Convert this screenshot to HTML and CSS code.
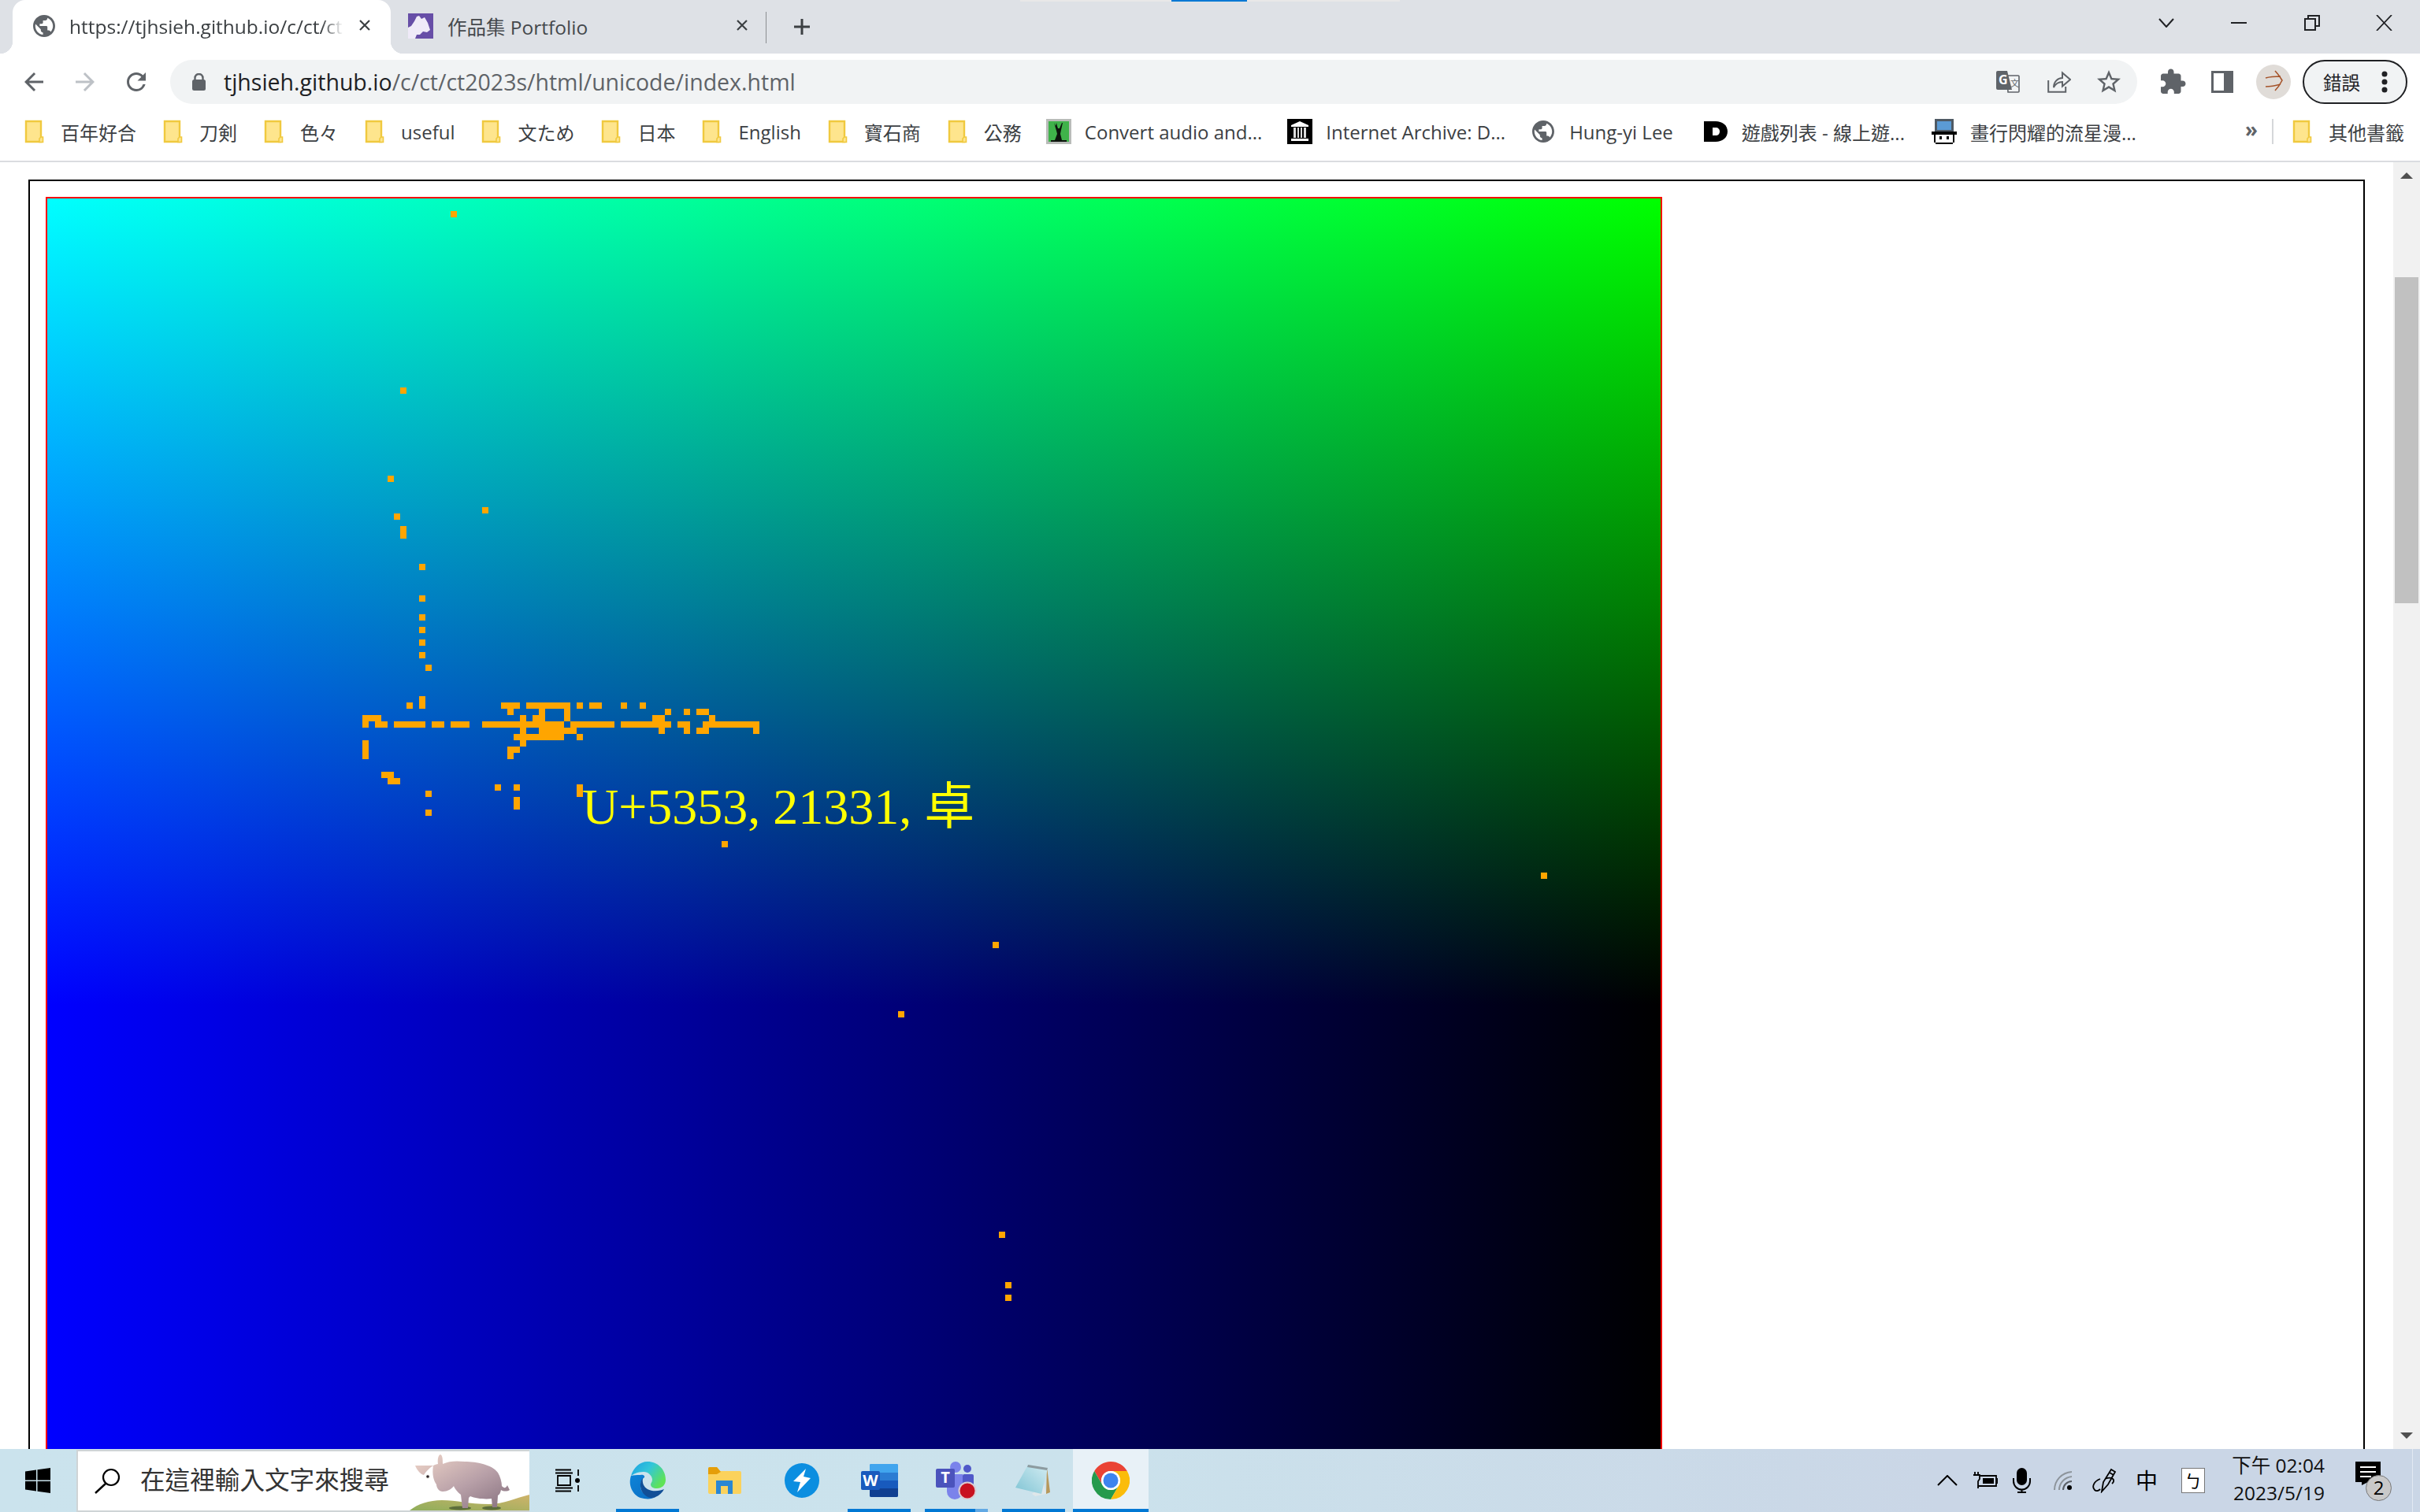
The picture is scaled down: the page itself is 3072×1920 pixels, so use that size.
FILE: index.html
```html
<!DOCTYPE html>
<html lang="zh-Hant">
<head>
<meta charset="utf-8">
<title>Unicode</title>
<link rel="stylesheet" href="styles.css">
</head>
<body>
<svg class="defs" width="0" height="0" aria-hidden="true">
  <symbol id="folder" viewBox="0 0 32 32">
    <path d="M5 3h19v26H5z" fill="#fee58d" stroke="#f0c93f" stroke-width="2.4"/>
    <path d="M24 23h2.500v6.500H22V25z" fill="#fee58d" stroke="#f0c93f" stroke-width="1.600"/>
  </symbol>
  <symbol id="globe" viewBox="2 2 20 20">
    <path d="M12 2C6.480 2 2 6.480 2 12s4.480 10 10 10 10-4.480 10-10S17.520 2 12 2zm-1 17.930c-3.950-.49-7-3.850-7-7.930 0-.62.08-1.210.21-1.790L9 15v1c0 1.100.9 2 2 2v1.930zm6.900-2.540c-.26-.81-1-1.390-1.900-1.390h-1v-3c0-.55-.45-1-1-1H8v-2h2c.55 0 1-.45 1-1V7h2c1.100 0 2-.9 2-2v-.41c2.930 1.190 5 4.060 5 7.410 0 2.080-.8 3.970-2.100 5.390z" fill="#5f6368"/>
  </symbol>
</svg>

<div class="screen-strip"><span class="screen-strip-mark"></span></div>

<header class="tabstrip">
  <div class="tab tab-active">
    <svg class="tab-icon" width="28" height="28"><use href="#globe"/></svg>
    <span class="tab-title tab-title-fade">https://tjhsieh.github.io/c/ct/ct</span>
    <svg class="tab-close" width="16" height="16" viewBox="0 0 16 16"><path d="M2 2l12 12M14 2L2 14" stroke="#3c4043" stroke-width="2.2"/></svg>
  </div>
  <div class="tab tab-idle">
    <svg class="tab-icon-p" width="32" height="32" viewBox="0 0 32 32">
      <rect width="32" height="32" fill="#674ea7"/>
      <path d="M14 3l3 4 4-2 4 7 3 9-4 3-5-1-4 4-4 0-2 5H0V18l4-2 4-6 3-6z" fill="#efeaf8"/>
    </svg>
    <span class="tab-title tab-title-idle">作品集 Portfolio</span>
    <svg class="tab-close tab-close-idle" width="16" height="16" viewBox="0 0 16 16"><path d="M2 2l12 12M14 2L2 14" stroke="#3c4043" stroke-width="2.2"/></svg>
  </div>
  <svg class="new-tab" width="24" height="24" viewBox="0 0 24 24"><path d="M12 2v20M2 12h20" stroke="#3c4043" stroke-width="3"/></svg>
  <div class="win-controls">
    <svg width="20" height="12" viewBox="0 0 20 12"><path d="M1 1l9 10 9-10" fill="none" stroke="#202124" stroke-width="2"/></svg>
    <svg class="win-min" width="20" height="2"><rect width="20" height="2" fill="#202124"/></svg>
    <svg class="win-max" width="20" height="20" viewBox="0 0 20 20"><path d="M1 5h13v14H1zM5 5V1h14v13h-5" fill="none" stroke="#202124" stroke-width="2"/></svg>
    <svg class="win-close" width="21" height="20" viewBox="0 0 21 20"><path d="M1 0l19 20M20 0L1 20" stroke="#202124" stroke-width="1.8"/></svg>
  </div>
</header>

<nav class="toolbar">
  <svg class="nav-btn" width="36" height="36" viewBox="0 0 24 24"><path d="M20 11H7.830l5.590-5.590L12 4l-8 8 8 8 1.410-1.410L7.830 13H20v-2z" fill="#5f6368"/></svg>
  <svg class="nav-btn" width="36" height="36" viewBox="0 0 24 24"><path d="M4 11h12.170l-5.590-5.590L12 4l8 8-8 8-1.410-1.410L16.170 13H4v-2z" fill="#bdc1c6"/></svg>
  <svg class="nav-btn" width="36" height="36" viewBox="0 0 24 24"><path d="M17.650 6.350A7.958 7.958 0 0 0 12 4c-4.420 0-7.990 3.580-7.990 8s3.570 8 7.990 8c3.730 0 6.840-2.550 7.730-6h-2.080A5.990 5.990 0 0 1 12 18c-3.310 0-6-2.690-6-6s2.690-6 6-6c1.660 0 3.140.69 4.220 1.780L13 11h7V4l-2.350 2.350z" fill="#5f6368"/></svg>
  <div class="omnibox">
    <svg class="lock" width="17" height="22" viewBox="0 0 17 22"><path d="M3.500 9V6a5 5 0 0 1 10 0v3" fill="none" stroke="#5f6368" stroke-width="2.4"/><rect y="8" width="17" height="14" rx="2.500" fill="#5f6368"/></svg>
    <span class="url"><span class="url-host">tjhsieh.github.io</span>/c/ct/ct2023s/html/unicode/index.html</span>
    <svg class="omni-translate" width="30" height="28" viewBox="0 0 30 28">
      <path d="M14 6h14a1 1 0 0 1 1 1v19a1 1 0 0 1-1 1H15z" fill="#f1f3f4" stroke="#5f6368" stroke-width="1.600"/>
      <path d="M2 0h12l6 24H2a2 2 0 0 1-2-2V2a2 2 0 0 1 2-2z" fill="#5f6368"/>
      <text x="3" y="17" class="tr-g">G</text><text x="18" y="20" class="tr-w">文</text>
    </svg>
    <svg class="omni-share" width="30" height="28" viewBox="0 0 30 28"><path d="M1.200 12v14.800h22V20" fill="none" stroke="#5f6368" stroke-width="2"/><path d="M8 21c0-7 5-12 11-12V2.500L29 11l-10 8.500V14c-5 0-9 3-11 7z" fill="none" stroke="#5f6368" stroke-width="2"/></svg>
    <svg class="omni-star" width="36" height="36" viewBox="0 0 24 24"><path d="M22 9.240l-7.190-.62L12 2 9.190 8.630 2 9.240l5.460 4.730L5.820 21 12 17.270 18.180 21l-1.630-7.030L22 9.240zM12 15.400l-3.760 2.270 1-4.280-3.320-2.880 4.380-.38L12 6.100l1.710 4.040 4.380.38-3.320 2.880 1 4.280L12 15.400z" fill="#5f6368"/></svg>
  </div>
  <svg class="tool-puzzle" width="36" height="36" viewBox="0 0 24 24"><path d="M20.500 11H19V7c0-1.100-.9-2-2-2h-4V3.500C13 2.120 11.880 1 10.500 1S8 2.120 8 3.500V5H4c-1.100 0-1.990.9-1.990 2v3.800H3.500c1.490 0 2.700 1.210 2.700 2.700s-1.210 2.700-2.700 2.700H2V20c0 1.100.9 2 2 2h3.800v-1.500c0-1.490 1.210-2.700 2.700-2.700 1.490 0 2.700 1.210 2.700 2.700V22H17c1.100 0 2-.9 2-2v-4h1.500c1.380 0 2.500-1.120 2.500-2.500S21.880 11 20.500 11z" fill="#5f6368"/></svg>
  <svg class="tool-panel" width="28" height="28" viewBox="0 0 28 28"><rect width="28" height="28" fill="#5f6368"/><rect x="3" y="3" width="13" height="22" fill="#fff"/></svg>
  <svg class="tool-avatar" width="44" height="44" viewBox="0 0 44 44"><circle cx="22" cy="22" r="22" fill="#e0dcd8"/><path d="M12 17c7-2 13-2 19-2M12 28c6 0 12-1 19-3M24 8c4 4 7 9 9 12-2 4-5 9-9 13" fill="none" stroke="#a5532a" stroke-width="1.600"/></svg>
  <div class="error-pill">
    <span>錯誤</span>
    <svg width="8" height="28" viewBox="0 0 8 28"><circle cx="4" cy="4" r="3.500" fill="#202124"/><circle cx="4" cy="14" r="3.500" fill="#202124"/><circle cx="4" cy="24" r="3.500" fill="#202124"/></svg>
  </div>
</nav>

<nav class="bookmarks">
  <a class="bm"><svg class="bm-icon" width="32" height="32"><use href="#folder"/></svg><span>百年好合</span></a>
  <a class="bm"><svg class="bm-icon" width="32" height="32"><use href="#folder"/></svg><span>刀剣</span></a>
  <a class="bm"><svg class="bm-icon" width="32" height="32"><use href="#folder"/></svg><span>色々</span></a>
  <a class="bm"><svg class="bm-icon" width="32" height="32"><use href="#folder"/></svg><span>useful</span></a>
  <a class="bm"><svg class="bm-icon" width="32" height="32"><use href="#folder"/></svg><span>文ため</span></a>
  <a class="bm"><svg class="bm-icon" width="32" height="32"><use href="#folder"/></svg><span>日本</span></a>
  <a class="bm"><svg class="bm-icon" width="32" height="32"><use href="#folder"/></svg><span>English</span></a>
  <a class="bm"><svg class="bm-icon" width="32" height="32"><use href="#folder"/></svg><span>寶石商</span></a>
  <a class="bm"><svg class="bm-icon" width="32" height="32"><use href="#folder"/></svg><span>公務</span></a>
  <a class="bm bm-site"><svg class="bm-icon" width="32" height="32" viewBox="0 0 32 32">
      <rect width="32" height="32" fill="#b9bcb9"/><rect x="3" y="3" width="26" height="26" fill="#3fb24a"/>
      <path d="M10 5l3 10 1 4-3 8H6v2h20v-2h-6l-2-8 1-5 2-9h-1l-3 7h-2l-1-3-1-4-1 4-2-4z" fill="#0d130d"/>
    </svg><span>Convert audio and...</span></a>
  <a class="bm bm-site"><svg class="bm-icon" width="32" height="32" viewBox="0 0 32 32">
      <rect width="32" height="32" fill="#000"/>
      <path d="M5 8l11-5 11 5v2H5z" fill="#fff"/><path d="M8 11h3v13H8zM13 11h2v13h-2zM17 11h2v13h-2zM21 11h3v13h-3z" fill="#ddd"/><rect x="5" y="25" width="22" height="3" fill="#fff"/>
    </svg><span>Internet Archive: D...</span></a>
  <a class="bm bm-hung"><svg class="bm-icon" width="32" height="32"><use href="#globe" x="2" y="2" width="28" height="28"/></svg><span>Hung-yi Lee</span></a>
  <a class="bm bm-game"><svg class="bm-icon" width="32" height="32" viewBox="0 0 32 32">
      <path d="M1 3h15c8 0 15 5 15 13s-7 13-15 13H1z" fill="#000"/><path d="M12 11h4c3 0 5 2 5 5s-2 5-5 5h-4z" fill="#fff"/>
    </svg><span>遊戲列表 - 線上遊...</span></a>
  <a class="bm bm-site"><svg class="bm-icon" width="32" height="32" viewBox="0 0 32 32">
      <rect x="4" y="0" width="24" height="16" fill="#4f5a64"/><rect x="7" y="3" width="18" height="11" fill="#5b9bd5"/>
      <path d="M0 16h32v4h-3v10h-2v2H5v-2H3V20H0z" fill="#000"/><rect x="5" y="20" width="22" height="10" fill="#fff"/><rect x="10" y="22" width="3" height="4" fill="#000"/><rect x="19" y="22" width="3" height="4" fill="#000"/>
    </svg><span>畫行閃耀的流星漫...</span></a>
  <span class="bm-more">»</span>
  <span class="bm-sep"></span>
  <a class="bm bm-other"><svg class="bm-icon" width="32" height="32"><use href="#folder"/></svg><span>其他書籤</span></a>
</nav>

<main class="viewport">
  <div class="page">
    <div class="plot">
      <svg class="cells" width="2048" height="1600" viewBox="0 0 2048 1600" shape-rendering="crispEdges">
        <g fill="#ffa500">
          <rect x="512" y="16" width="8" height="8"/><rect x="448" y="240" width="8" height="8"/>
          <rect x="432" y="352" width="8" height="8"/><rect x="552" y="392" width="8" height="8"/>
          <rect x="440" y="400" width="8" height="8"/><rect x="448" y="416" width="8" height="16"/>
          <rect x="472" y="464" width="8" height="8"/><rect x="472" y="504" width="8" height="8"/>
          <rect x="472" y="528" width="8" height="8"/><rect x="472" y="544" width="8" height="8"/>
          <rect x="472" y="560" width="8" height="8"/><rect x="472" y="576" width="8" height="8"/>
          <rect x="480" y="592" width="8" height="8"/><rect x="472" y="632" width="8" height="16"/>
          <rect x="456" y="640" width="8" height="8"/><rect x="576" y="640" width="24" height="8"/>
          <rect x="608" y="640" width="56" height="8"/><rect x="672" y="640" width="8" height="8"/>
          <rect x="688" y="640" width="16" height="8"/><rect x="728" y="640" width="8" height="8"/>
          <rect x="752" y="640" width="8" height="8"/><rect x="584" y="648" width="8" height="8"/>
          <rect x="624" y="648" width="8" height="8"/><rect x="656" y="648" width="8" height="8"/>
          <rect x="784" y="648" width="8" height="8"/><rect x="808" y="648" width="8" height="8"/>
          <rect x="824" y="648" width="16" height="8"/><rect x="400" y="656" width="24" height="8"/>
          <rect x="600" y="656" width="8" height="8"/><rect x="616" y="656" width="16" height="8"/>
          <rect x="656" y="656" width="8" height="8"/><rect x="768" y="656" width="16" height="8"/>
          <rect x="840" y="656" width="8" height="8"/><rect x="400" y="664" width="8" height="8"/>
          <rect x="416" y="664" width="16" height="8"/><rect x="440" y="664" width="40" height="8"/>
          <rect x="488" y="664" width="16" height="8"/><rect x="512" y="664" width="24" height="8"/>
          <rect x="552" y="664" width="104" height="8"/><rect x="664" y="664" width="56" height="8"/>
          <rect x="728" y="664" width="64" height="8"/><rect x="800" y="664" width="16" height="8"/>
          <rect x="832" y="664" width="72" height="8"/><rect x="600" y="672" width="8" height="8"/>
          <rect x="624" y="672" width="48" height="8"/><rect x="776" y="672" width="8" height="8"/>
          <rect x="808" y="672" width="8" height="8"/><rect x="824" y="672" width="16" height="8"/>
          <rect x="896" y="672" width="8" height="8"/><rect x="592" y="680" width="64" height="8"/>
          <rect x="672" y="680" width="8" height="8"/><rect x="400" y="688" width="8" height="24"/>
          <rect x="600" y="688" width="8" height="8"/><rect x="584" y="696" width="16" height="8"/>
          <rect x="584" y="704" width="8" height="8"/><rect x="424" y="728" width="16" height="8"/>
          <rect x="432" y="736" width="16" height="8"/><rect x="568" y="744" width="8" height="8"/>
          <rect x="592" y="744" width="8" height="8"/><rect x="672" y="744" width="8" height="16"/>
          <rect x="480" y="752" width="8" height="8"/><rect x="592" y="760" width="8" height="16"/>
          <rect x="480" y="776" width="8" height="8"/><rect x="856" y="816" width="8" height="8"/>
          <rect x="1896" y="856" width="8" height="8"/>
          <rect x="1200" y="944" width="8" height="8"/><rect x="1080" y="1032" width="8" height="8"/>
          <rect x="1208" y="1312" width="8" height="8"/><rect x="1216" y="1376" width="8" height="8"/>
          <rect x="1216" y="1392" width="8" height="8"/>
        </g>
      </svg>
      <div class="plot-label">U+5353, 21331, 卓</div>
    </div>
  </div>
  <aside class="scrollbar">
    <div class="sb-btn"><span class="sb-arrow-up"></span></div>
    <div class="sb-track"><div class="sb-thumb"></div></div>
    <div class="sb-btn"><span class="sb-arrow-down"></span></div>
  </aside>
</main>

<footer class="taskbar">
  <div class="start">
    <svg width="32" height="32" viewBox="0 0 32 32"><path d="M0 4.500l14-2v13H0zM15.500 2.300L32 0v15.500H15.500zM0 17h14v12.500l-14-2zM15.500 17H32v15l-16.500-2.300z" fill="#000"/></svg>
  </div>
  <div class="search">
    <svg class="search-icon" width="34" height="33" viewBox="0 0 34 33"><circle cx="21" cy="12" r="10" fill="none" stroke="#000" stroke-width="2.200"/><path d="M14 20L1 32" stroke="#000" stroke-width="2.400"/></svg>
    <span class="search-text">在這裡輸入文字來搜尋</span>
    <svg class="rhino" width="152" height="78" viewBox="0 0 152 78">
      <defs>
        <linearGradient id="hill" x1="0" x2="1" y1="1" y2="0"><stop offset="0" stop-color="#8fae5b"/><stop offset="1" stop-color="#cfb36a"/></linearGradient>
        <linearGradient id="hide" x1="0" x2="1" y1="0" y2="1"><stop offset="0" stop-color="#efd5c8"/><stop offset=".55" stop-color="#b8a0a8"/><stop offset="1" stop-color="#86707e"/></linearGradient>
      </defs>
      <path d="M0 78C10 70 25 65 41 65c19 0 34 5 59 5 20 0 35-8 52-12v20z" fill="url(#hill)"/>
      <ellipse cx="64" cy="75" rx="14" ry="2.500" fill="#5d6e3c"/><ellipse cx="104" cy="75" rx="12" ry="2.500" fill="#5d6e3c"/>
      <path d="M7 21c3 7 7 11 11 12 6-9 12-13 18-14-1-7 1-12 3-12 3 1 3 7 3 12 8-4 18-4 28-3 15 0 35 4 42 14 3 5 5 12 5 17 3 3 5 3 7-1l3 6c-3 2-8 2-11 0-1 4-2 6-4 7l-1 15h-6l-1-11c-8 1-20 0-27-3l-2 2-1 13h-7l-2-17c-4-3-8-8-9-11-3 4-8 7-14 7-5 0-8-5-8-9-3-4-6-12-4-24z" fill="url(#hide)"/>
      <circle cx="23" cy="35" r="3" fill="#f6f6f0"/><circle cx="23" cy="35" r="1.800" fill="#2a2226"/>
    </svg>
  </div>
  <div class="task-view">
    <svg width="32" height="30" viewBox="0 0 32 30"><path d="M1 1.500h20M1 28.500h20M4 9h16v12H4zM1 5.500h22M1 24.500h22M30 1v8M30 21v8" fill="none" stroke="#000" stroke-width="1.800"/><circle cx="29" cy="15" r="3" fill="#000"/></svg>
  </div>
  <div class="apps">
    <div class="app app-open">
      <svg width="50" height="48" viewBox="0 0 48 48">
        <defs>
          <linearGradient id="edgeA" x1="0" x2="1" y1="0" y2=".6"><stop offset="0" stop-color="#1c9fe3"/><stop offset=".5" stop-color="#33c6d9"/><stop offset="1" stop-color="#5fe356"/></linearGradient>
          <linearGradient id="edgeB" x1="0" x2="1" y1="0" y2="1"><stop offset="0" stop-color="#0d84d8"/><stop offset="1" stop-color="#0b6cc2"/></linearGradient>
        </defs>
        <path d="M3 18C6 8 14 0 24 0c13 0 23 10 23 23 0 7-5 11-11 11-5 0-8-2-8-5 0-2 2-3 2-6 0-5-5-10-11-10-8 0-13 3-16 5z" fill="url(#edgeA)"/>
        <path d="M3 18C-1 30 5 42 15 46c7 2 14 2 19-1-8 1-15-3-18-9-2-6-1-12 4-16 1-2-2-4-5-3-5 0-9 0-12 1z" fill="url(#edgeB)"/>
        <path d="M34 45c5-2 9-6 11-10-4 2-14 4-21 0-5-3-7-8-6-14-3 3-4 9-2 15 3 7 10 12 18 9z" fill="#114f97"/>
      </svg>
    </div>
    <div class="app">
      <svg width="42" height="34" viewBox="0 0 42 34">
        <path d="M0 2a2 2 0 0 1 2-2h9l4 5h25a2 2 0 0 1 2 2v25a2 2 0 0 1-2 2H2a2 2 0 0 1-2-2z" fill="#fbd25c"/><path d="M0 2a2 2 0 0 1 2-2h9l5 6-5 3H0z" fill="#e59e08"/>
        <path d="M10 34V17h21v17h-6V24h-9v10z" fill="#2b87d3"/>
      </svg>
    </div>
    <div class="app">
      <svg width="44" height="44" viewBox="0 0 44 44"><circle cx="22" cy="22" r="22" fill="#0c8ee0"/><path d="M27 7L11 23l9 1-4 13 17-18-9-2z" fill="#fff"/></svg>
    </div>
    <div class="app app-open">
      <svg width="47" height="42" viewBox="0 0 47 42">
        <rect x="11" width="36" height="42" rx="2" fill="#2b7cd3"/><path d="M13 0h32a2 2 0 0 1 2 2v9H11V2a2 2 0 0 1 2-2z" fill="#41a5ee"/><rect x="11" y="21" width="36" height="10" fill="#185abd"/><path d="M11 31h36v9a2 2 0 0 1-2 2H13a2 2 0 0 1-2-2z" fill="#103f91"/>
        <rect y="9" width="24" height="24" rx="2" fill="#185abd"/><text x="12" y="28" class="word-w">W</text>
      </svg>
    </div>
    <div class="app app-open app-open-split">
      <svg width="52" height="48" viewBox="0 0 52 48">
        <circle cx="25" cy="7" r="7" fill="#7b83eb"/><circle cx="40" cy="9" r="5" fill="#5059c9"/><rect x="34" y="16" width="14" height="18" rx="2" fill="#5059c9"/>
        <path d="M14 16h20v22a10 10 0 0 1-20 0z" fill="#7b83eb"/><rect y="9" width="24" height="24" rx="2" fill="#4b53bc"/><text x="12" y="27" class="teams-t">T</text>
        <circle cx="40" cy="37" r="10.500" fill="#c8111f" stroke="#d9cdd2" stroke-width="2"/>
      </svg>
    </div>
    <div class="app app-open">
      <svg width="46" height="42" viewBox="0 0 46 42">
        <defs><linearGradient id="pad" x1="0" x2="1" y1="1" y2="0"><stop offset="0" stop-color="#7fc4d4"/><stop offset="1" stop-color="#d3ecf2"/></linearGradient></defs>
        <path d="M40 4l4 32-5 2z" fill="#b7985b"/><path d="M36 24l3 14-14 3-4-3z" fill="#dfe7ea"/>
        <path d="M16 1l25 4-8 33L0 30z" fill="url(#pad)"/><path d="M16 1l25 4-1 3-25-4z" fill="#8d9ba0"/>
      </svg>
    </div>
    <div class="app app-open app-active">
      <svg width="48" height="48" viewBox="0 0 48 48">
        <path d="M24 0C15 0 7.200 5 3.200 12L13.600 30A12 12 0 0 1 24 12H44.800C40.700 4.800 32.900 0 24 0z" fill="#ea4335"/>
        <path d="M3.200 12A24 24 0 0 0 24 48L34.400 30A12 12 0 0 1 13.600 30z" fill="#259a4d"/>
        <path d="M44.800 12H24A12 12 0 0 1 34.400 30L24 48A24 24 0 0 0 44.800 12z" fill="#fbbc0a"/>
        <circle cx="24" cy="24" r="12" fill="#fff"/><circle cx="24" cy="24" r="9.500" fill="#3d84ef"/>
      </svg>
    </div>
  </div>
  <div class="tray">
    <svg class="tr-chevron" width="26" height="14" viewBox="0 0 26 14"><path d="M1 13L13 1l12 12" fill="none" stroke="#000" stroke-width="2"/></svg>
    <svg class="tr-battery" width="32" height="22" viewBox="0 0 32 22"><path d="M3 0v4M7 0v4M1 4h8v5L7 12v9" fill="none" stroke="#000" stroke-width="1.800"/><path d="M10 5h20v13H7" fill="none" stroke="#000" stroke-width="1.800"/><rect x="13" y="8" width="14" height="7" fill="#000"/><rect x="30" y="8" width="2" height="7" fill="#000"/></svg>
    <svg class="tr-mic" width="23" height="32" viewBox="0 0 23 32"><rect x="5" width="13" height="22" rx="6.500" fill="#000"/><path d="M1 13v4a10.500 10.500 0 0 0 21 0v-4M11.500 27v4M6 31h11" fill="none" stroke="#000" stroke-width="2"/></svg>
    <svg class="tr-wifi" width="23" height="24" viewBox="0 0 23 24"><path d="M1 24C1 12 10 2 23 1M7 24C7 15 14 8 23 7" fill="none" stroke="#8d949b" stroke-width="2"/><path d="M12 24c0-6 5-11 11-11" fill="none" stroke="#5a5f66" stroke-width="2"/><circle cx="20" cy="21" r="3" fill="#000"/></svg>
    <svg class="tr-pen" width="32" height="32" viewBox="0 0 32 32"><path d="M12 30l2-12L24 2l5 3-9 16zM22 6l5 3M16 14c10-4 14 2 9 6M10 14c-8 3-11 10-7 14 2 2 5 1 7-1" fill="none" stroke="#000" stroke-width="1.800"/></svg>
    <span class="tr-ime">中</span>
    <span class="tr-box">ㄅ</span>
    <div class="clock"><span>下午 02:04</span><span>2023/5/19</span></div>
    <div class="notify">
      <svg width="32" height="30" viewBox="0 0 32 30"><path d="M0 0h32v26H16l-8 4v-4H0z" fill="#000"/><path d="M6 7h20M6 13h20M6 19h14" stroke="#fff" stroke-width="2"/></svg>
      <span class="notify-badge">2</span>
    </div>
    <span class="show-desktop"></span>
  </div>
</footer>
</body>
</html>
```
FILE: styles.css
```css
* { box-sizing: border-box; }
html, body { margin: 0; height: 100%; }
body {
  width: 3072px;
  height: 1920px;
  overflow: hidden;
  display: flex;
  flex-direction: column;
  position: relative;
  background: #fff;
  font-family: "Open Sans", "Noto Sans CJK TC", sans-serif;
  color: #3c4043;
}
svg { display: block; flex: none; }
.defs { position: absolute; }

.screen-strip {
  position: absolute; left: 1295px; top: 0; width: 482px; height: 2px;
  background: #e8e8e8; padding-left: 192px;
}
.screen-strip-mark { display: block; width: 96px; height: 2px; background: #0078d4; }

/* tabs */
.tabstrip {
  flex: none; height: 68px; background: #dee1e6;
  display: flex; align-items: stretch; padding-left: 16px;
}
.tab { position: relative; display: flex; align-items: center; width: 480px; height: 68px; font-size: 24.5px; }
.tab-active { background: #fff; border-radius: 16px 16px 0 0; padding-left: 26px; }
.tab-active::before, .tab-active::after {
  content: ""; position: absolute; bottom: 0; width: 16px; height: 16px;
}
.tab-active::before { left: -16px; background: radial-gradient(circle at 0 0, transparent 16px, #fff 16.5px); }
.tab-active::after { right: -16px; background: radial-gradient(circle at 100% 0, transparent 16px, #fff 16.5px); }
.tab-icon { margin-right: 18px; margin-top: -2px; }
.tab-title { white-space: nowrap; margin-top: -2px; }
.tab-title-fade {
  width: 348px;
  -webkit-mask-image: linear-gradient(to right, #000 92%, transparent);
  mask-image: linear-gradient(to right, #000 92%, transparent);
}
.tab-close { margin-left: 19px; margin-top: -4px; }
.tab-idle { padding-left: 22px; width: 477px; }
.tab-idle::after {
  content: ""; position: absolute; right: 0; top: 15px; width: 1px; height: 40px; background: #8a8d91;
}
.tab-icon-p { margin-right: 18px; margin-top: -2px; }
.tab-title-idle { width: 366px; color: #45494d; }
.tab-close-idle { margin-left: 0; }
.new-tab { margin: 22px 0 0 33px; }
.win-controls { margin-left: auto; display: flex; align-items: center; height: 58px; padding-right: 35px; }
.win-min { margin-left: 72px; }
.win-max { margin-left: 73px; }
.win-close { margin-left: 71px; }

/* toolbar */
.toolbar { flex: none; height: 64px; display: flex; align-items: flex-start; padding: 8px 16px 0 25px; background: #fff; }
.nav-btn { margin: 10px 29px 0 0; }
.nav-btn:nth-child(3) { margin-right: 25px; }
.omnibox {
  flex: 1; height: 56px; margin-right: 27px; padding-left: 28px;
  display: flex; align-items: center; background: #f1f3f4; border-radius: 28px;
}
.lock { margin-right: 23px; }
.url { flex: 1; font-size: 28.5px; color: #5f6368; white-space: nowrap; }
.url-host { color: #202124; }
.tr-g { font-family: "Open Sans", sans-serif; font-weight: 700; font-size: 16px; fill: #fff; }
.tr-w { font-family: "Noto Sans CJK TC", sans-serif; font-size: 11px; fill: #5f6368; }
.omni-share { margin-left: 35px; }
.omni-star { margin: 0 18px 0 30px; }
.tool-puzzle { margin: 10px 31px 0 0; }
.tool-panel { margin: 14px 29px 0 0; }
.tool-avatar { margin: 6px 15px 0 0; }
.error-pill {
  width: 133px; height: 56px; border: 2px solid #202124; border-radius: 28px;
  display: flex; align-items: center; padding-left: 24px; gap: 27px;
  font-size: 23.5px; color: #202124; background: #f1f3f4;
}

/* bookmarks */
.bookmarks {
  flex: none; height: 74px; display: flex; align-items: center; padding: 0 20px 2px 28px;
  border-bottom: 2px solid #dadce0; background: #fff; font-size: 24px; white-space: nowrap;
}
.bm { display: flex; align-items: center; gap: 17px; margin-right: 31px; color: #3c4043; }
.bm-site { margin-right: 32px; }
.bm-hung { margin-right: 38px; }
.bm-game { margin-right: 34px; }
.bm-icon { flex: none; }
.bm-more { margin-left: auto; font-size: 26px; font-weight: 700; color: #5f6368; margin-right: 18px; line-height: 1; margin-top: -6px; }
.bm-sep { width: 2px; height: 32px; background: #d5d7da; margin-right: 21px; }
.bm-other { margin-right: 0; }

/* page */
.viewport { flex: 1; min-height: 0; display: flex; overflow: hidden; }
.page {
  flex: 1; min-width: 0; margin: 22px 36px 0; height: 2200px;
  border: 2px solid #000; padding: 20px;
}
.plot {
  position: relative; width: 2052px; height: 2052px; border: 2px solid #f00;
  background-image: linear-gradient(to bottom, #0f0, #000 1024px), linear-gradient(to right, #00f, #000);
  background-blend-mode: screen;
}
.cells { position: absolute; left: 0; top: 0; }
.plot-label {
  position: absolute; left: 679px; top: 737px;
  font-family: "Liberation Serif", "Noto Sans CJK TC", serif;
  font-size: 64px; line-height: 72px; color: #ff0; white-space: nowrap;
}
.scrollbar { flex: none; width: 34px; background: #f1f1f1; display: flex; flex-direction: column; }
.sb-btn { flex: none; height: 34px; display: flex; align-items: center; justify-content: center; }
.sb-arrow-up { border: 8px solid transparent; border-top: 0; border-bottom-color: #505050; }
.sb-arrow-down { border: 8px solid transparent; border-bottom: 0; border-top-color: #505050; }
.sb-track { flex: 1; padding: 112px 2px 0; }
.sb-thumb { height: 414px; background: #c1c1c1; }

/* taskbar */
.taskbar {
  flex: none; height: 80px; display: flex; align-items: stretch; position: relative; z-index: 1;
  background: linear-gradient(to right, #cbe3ed, #cbe2ec 45%, #cad6e6 80%, #cad6e6);
  color: #000;
}
.start { width: 97px; padding-left: 32px; display: flex; align-items: center; }
.search {
  width: 575px; margin: 1px 0 0; background: #fff; border: 2px solid #cfd4d6; border-right: 0;
  display: flex; align-items: center; position: relative; padding-left: 21px;
}
.search-icon { margin-right: 24px; }
.search-text { font-size: 31.6px; line-height: 40px; margin-top: -4px; color: #333; white-space: nowrap; }
.rhino { position: absolute; right: 0; bottom: 0; }
.task-view { width: 96px; display: flex; align-items: center; justify-content: center; }
.apps { display: flex; gap: 2px; margin-left: 6px; }
.app { position: relative; width: 96px; display: flex; align-items: center; justify-content: center; }
.app-open::after {
  content: ""; position: absolute; left: 8px; right: 8px; bottom: 0; height: 4px; background: #0078d4;
}
.app-open-split::after { background: linear-gradient(to right, #0078d4 80%, #62a9e4 80%); }
.app-active { background: #e8f1f7; }
.app-active::after { left: 0; right: 0; }
.word-w { font-family: "Open Sans", sans-serif; font-weight: 700; font-size: 20px; fill: #fff; text-anchor: middle; }
.teams-t { font-family: "Open Sans", sans-serif; font-weight: 700; font-size: 20px; fill: #fff; text-anchor: middle; }

.tray { margin-left: auto; display: flex; align-items: center; position: relative; padding-right: 36px; }
.tr-chevron { margin-right: 19px; }
.tr-battery { margin-right: 19px; }
.tr-mic { margin-right: 29px; }
.tr-wifi { margin-right: 26px; }
.tr-pen { margin-right: 23px; }
.tr-ime { width: 28px; margin-right: 30px; font-size: 28px; line-height: 1; color: #000; }
.tr-box {
  width: 30px; height: 32px; margin-right: 36px; background: #fff; border: 1px solid #777;
  font-size: 22px; line-height: 30px; text-align: center; color: #000;
}
.clock {
  width: 116px; margin-top: -4px; margin-right: 39px; display: flex; flex-direction: column; align-items: flex-end; gap: 3px;
  font-size: 24.5px; line-height: 32px; white-space: nowrap; color: #111;
}
.notify { position: relative; width: 46px; height: 50px; margin-top: 2px; }
.notify-badge {
  position: absolute; right: 0; bottom: 0; width: 33px; height: 33px; border-radius: 50%;
  background: #c9c9c9; border: 1px solid #777; font-size: 24px; line-height: 30px; text-align: center; color: #000;
}
.show-desktop { position: absolute; right: 9px; top: 0; width: 1px; height: 80px; background: #e2e9f2; }
```
